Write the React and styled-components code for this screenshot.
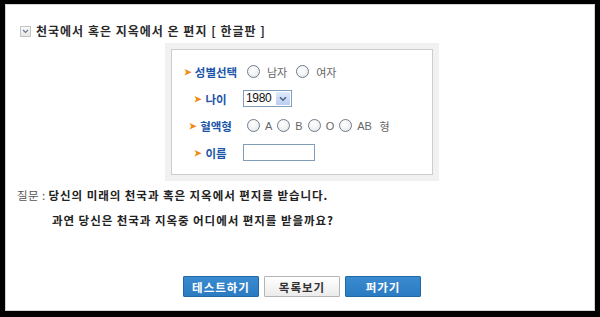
import React, { useState } from 'react';
import styled, { createGlobalStyle } from 'styled-components';

const GlobalStyle = createGlobalStyle`
  html, body {
    margin: 0;
    padding: 0;
    background: #fff;
  }
  body {
    font-family: "Noto Sans CJK KR", "Noto Sans", sans-serif;
    font-size: 12px;
    color: #222;
  }
`;

const Frame = styled.div`
  box-sizing: border-box;
  width: 600px;
  height: 317px;
  border-style: solid;
  border-color: #000;
  border-width: 4px 5px 6px 5px;
  box-shadow: inset 0 0 0 1px #d4d4d4;
  padding: 18px 0 14px 0;
  display: flex;
  flex-direction: column;
`;

const TitleRow = styled.div`
  display: flex;
  align-items: center;
  gap: 5px;
  height: 18px;
  padding-left: 15px;
`;

const ToggleIcon = styled.span`
  box-sizing: border-box;
  width: 11px;
  height: 11px;
  border: 1px solid #c4c4c4;
  background: linear-gradient(#fafafa, #e6e6e6);
  display: flex;
  align-items: center;
  justify-content: center;
`;

const Title = styled.h1`
  margin: 0;
  font-size: 12px;
  font-weight: 700;
  color: #2a2a2a;
  letter-spacing: 1px;
  line-height: 18px;
`;

const Panel = styled.div`
  margin: 3px 0 0 160px;
  width: 274px;
  box-sizing: border-box;
  padding: 6px;
  background: #f1f1f1;
`;

const PanelInner = styled.div`
  background: #fff;
  border: 1px solid #cdcdcd;
  padding: 8px 0;
`;

const Row = styled.div`
  display: flex;
  align-items: center;
  height: 27px;
`;

const Label = styled.div`
  width: 71px;
  padding-left: 6px;
  box-sizing: border-box;
  display: flex;
  justify-content: center;
  align-items: center;
  gap: 3px;
  color: #1c56a8;
  font-weight: 700;
  font-size: 11.5px;
`;

const Arrow = styled.span`
  color: #f08a12;
  font-size: 9px;
  line-height: 1;
`;

const Field = styled.div`
  display: flex;
  align-items: center;
  gap: ${p => p.$gap || 6}px;
  padding-left: ${p => p.$pad || 0}px;
  color: #666;
  font-size: 11px;
`;

const Option = styled.label`
  display: flex;
  align-items: center;
  gap: ${p => p.$gap ?? 6}px;
  font-family: ${p => (p.$latin ? '"Liberation Sans", Arial, sans-serif' : 'inherit')};
  cursor: pointer;
`;

const Radio = styled.span`
  box-sizing: border-box;
  width: 13px;
  height: 13px;
  border-radius: 50%;
  border: 1px solid #6e7c90;
  background: radial-gradient(circle at 40% 35%, #fff 0%, #f2f2f2 55%, #d9dde3 100%);
  display: flex;
  align-items: center;
  justify-content: center;
  &::after {
    content: '';
    width: 5px;
    height: 5px;
    border-radius: 50%;
    background: ${p => (p.$on ? '#2a4a7a' : 'transparent')};
  }
`;

const Select = styled.div`
  box-sizing: border-box;
  width: 49px;
  height: 17px;
  border: 1px solid #7f9db9;
  display: flex;
  align-items: stretch;
  background: #fff;
`;

const SelectValue = styled.span`
  flex: 1;
  font-family: "Liberation Sans", Arial, sans-serif;
  font-size: 12px;
  color: #111;
  line-height: 15px;
  padding-left: 2px;
  letter-spacing: -0.3px;
`;

const SelectButton = styled.span`
  width: 14px;
  margin: 1px;
  background: linear-gradient(#dfe9fb, #b9cdf1);
  border-radius: 1px;
  display: flex;
  align-items: center;
  justify-content: center;
`;

const TextInput = styled.input`
  box-sizing: border-box;
  width: 72px;
  height: 17px;
  border: 1px solid #7f9db9;
  padding: 0 3px;
  font-size: 12px;
  outline: none;
`;

const Question = styled.div`
  margin-top: 2px;
  padding-left: 12px;
  line-height: 25px;
  font-weight: 700;
  font-size: 11.5px;
  color: #222;
  letter-spacing: 0.95px;
`;

const QuestionLine = styled.div`
  padding-left: ${p => p.$indent || 0}px;
`;

const QuestionLead = styled.span`
  font-weight: 400;
  color: #555;
  letter-spacing: 0.4px;
`;

const Buttons = styled.div`
  margin-top: auto;
  display: flex;
  justify-content: center;
  gap: 5px;
  padding-left: 4px;
`;

const Button = styled.button`
  box-sizing: border-box;
  width: 76px;
  height: 21px;
  padding: 0;
  font-family: inherit;
  font-size: 11.5px;
  font-weight: 700;
  letter-spacing: 1px;
  cursor: pointer;
  border-radius: 1px;
  border: 1px solid ${p => (p.$primary ? '#2369a8' : '#b4b4b4')};
  color: ${p => (p.$primary ? '#fff' : '#333')};
  background: ${p => (p.$primary
    ? 'linear-gradient(#3a8ad0, #2b7bc2)'
    : 'linear-gradient(#ffffff, #ebebeb)')};
`;

function App() {
  const [gender, setGender] = useState('');
  const [blood, setBlood] = useState('');

  return (
    <>
      <GlobalStyle />
      <Frame>
        <TitleRow>
          <ToggleIcon>
            <svg width="7" height="5" viewBox="0 0 7 5">
              <path d="M1 1 L3.5 3.5 L6 1" fill="none" stroke="#6a7a92" strokeWidth="1.2" />
            </svg>
          </ToggleIcon>
          <Title>천국에서 혹은 지옥에서 온 편지 [ 한글판 ]</Title>
        </TitleRow>

        <Panel>
          <PanelInner>
            <Row>
              <Label><Arrow>➤</Arrow>성별선택</Label>
              <Field $pad={4} $gap={9}>
                <Option $gap={7} onClick={() => setGender('m')}>
                  <Radio $on={gender === 'm'} />남자
                </Option>
                <Option $gap={7} onClick={() => setGender('f')}>
                  <Radio $on={gender === 'f'} />여자
                </Option>
              </Field>
            </Row>
            <Row>
              <Label><Arrow>➤</Arrow>나이</Label>
              <Field>
                <Select>
                  <SelectValue>1980</SelectValue>
                  <SelectButton>
                    <svg width="8" height="6" viewBox="0 0 8 6">
                      <path d="M1 1.2 L4 4.2 L7 1.2" fill="none" stroke="#4d6185" strokeWidth="1.6" />
                    </svg>
                  </SelectButton>
                </Select>
              </Field>
            </Row>
            <Row>
              <Label><Arrow>➤</Arrow>혈액형</Label>
              <Field $pad={4} $gap={5}>
                {['A', 'B', 'O', 'AB'].map(t => (
                  <Option key={t} $latin $gap={5} onClick={() => setBlood(t)}>
                    <Radio $on={blood === t} />{t}
                  </Option>
                ))}
                <Option $gap={0}>&nbsp;형</Option>
              </Field>
            </Row>
            <Row>
              <Label><Arrow>➤</Arrow>이름</Label>
              <Field>
                <TextInput type="text" />
              </Field>
            </Row>
          </PanelInner>
        </Panel>

        <Question>
          <QuestionLine>
            <QuestionLead>질문 : </QuestionLead>당신의 미래의 천국과 혹은 지옥에서 편지를 받습니다.
          </QuestionLine>
          <QuestionLine $indent={35}>과연 당신은 천국과 지옥중 어디에서 편지를 받을까요?</QuestionLine>
        </Question>

        <Buttons>
          <Button $primary>테스트하기</Button>
          <Button>목록보기</Button>
          <Button $primary>퍼가기</Button>
        </Buttons>
      </Frame>
    </>
  );
}

export default App;
